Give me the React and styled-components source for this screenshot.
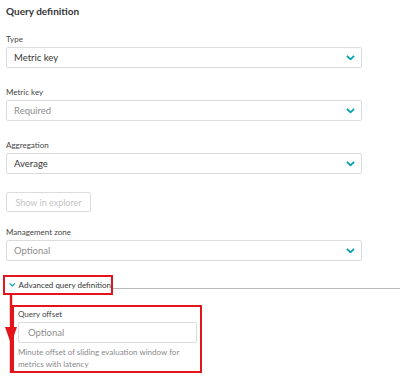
import styled, { createGlobalStyle } from 'styled-components';

const GlobalStyle = createGlobalStyle`
  body {
    margin: 0;
    background: #fff;
    font-family: Lato, "Open Sans", "Liberation Sans", sans-serif;
    color: #454646;
  }
`

const Chevron = ({ size = 9 }) => (
  <svg width={size} height={size * 0.6} viewBox="0 0 10 6">
    <path d="M1 1 L5 4.8 L9 1" fill="none" stroke="#00a1b2" strokeWidth="2" />
  </svg>
);

const Field = ({ label, value, placeholder }) => (
  <FieldWrap>
    <Label>{label}</Label>
    <Select>
      <SelectText placeholder={placeholder ? 1 : 0}>{value}</SelectText>
      <Chevron />
    </Select>
  </FieldWrap>
);

const App = () => {
  return (
    <Page>
      <GlobalStyle />
      <Title>Query definition</Title>
      <Field label='Type' value='Metric key' />
      <Field label='Metric key' value='Required' placeholder />
      <Field label='Aggregation' value='Average' />
      <Button disabled>Show in explorer</Button>
      <Field label='Management zone' value='Optional' placeholder />
      <Advanced>
        <ToggleRow>
          <Toggle>
            <Chevron size={9} />
            <span>Advanced query definition</span>
          </Toggle>
          <Divider />
        </ToggleRow>
        <Highlight>
          <Label>Query offset</Label>
          <Input placeholder='Optional' />
          <Help>Minute offset of sliding evaluation window for metrics with latency</Help>
        </Highlight>
        <Arrow width='14' height='80' viewBox='0 0 14 80'>
          <rect x='4.8' y='0' width='2.4' height='78' fill='#e3141c' />
          <polygon points='0,32 12,32 6,49' fill='#e3141c' />
        </Arrow>
      </Advanced>
    </Page>
  );
};

const Page = styled.div`
  width: 400px;
  height: 379px;
  box-sizing: border-box;
  padding: 4px 38px 0 6px;
  overflow: hidden;
`

const Title = styled.div`
  font-size: 10px;
  font-weight: 700;
  line-height: 14px;
  color: #353535;
  margin-bottom: 15px;
`

const FieldWrap = styled.div`
  margin-bottom: 18px;
`

const Label = styled.div`
  font-size: 8px;
  line-height: 12px;
  color: #454646;
  margin-bottom: 2px;
`

const Select = styled.div`
  height: 21px;
  box-sizing: border-box;
  border: 1px solid #dcdcdc;
  border-radius: 2px;
  display: flex;
  align-items: center;
  justify-content: space-between;
  padding: 0 6px 0 7px;
`

const SelectText = styled.span`
  font-size: 9.5px;
  color: ${props => props.placeholder ? '#8e8e8e' : '#353535'};
`

const Button = styled.button`
  display: block;
  width: 85px;
  height: 20px;
  padding: 0;
  border: 1px solid #dcdcdc;
  border-radius: 2px;
  background: #fff;
  font-family: inherit;
  font-size: 9px;
  color: #c4c4c4;
  margin: 1px 0 14px;
`

const Advanced = styled.div`
  position: relative;
  margin: -4px -38px 0 -3px;
`

const ToggleRow = styled.div`
  display: flex;
  align-items: center;
`

const Toggle = styled.div`
  display: flex;
  align-items: center;
  gap: 3px;
  width: 110px;
  height: 20px;
  box-sizing: border-box;
  border: 2px solid #e3141c;
  padding-left: 4px;
  font-size: 8px;
  color: #353535;
  white-space: nowrap;
`

const Divider = styled.div`
  flex: 1;
  height: 1px;
  background: #b9b9b9;
  margin-top: 6px;
`

const Highlight = styled.div`
  width: 190px;
  margin: 10px 0 0 9px;
  box-sizing: border-box;
  border: 2px solid #e3141c;
  padding: 1px 3px 1px 4px;
`

const Input = styled.input`
  display: block;
  width: 100%;
  height: 21px;
  box-sizing: border-box;
  border: 1px solid #dcdcdc;
  border-radius: 2px;
  padding: 0 9px;
  font-family: inherit;
  font-size: 9.5px;
  margin-bottom: 3px;
  &::placeholder {
    color: #8e8e8e;
  }
`

const Help = styled.div`
  font-size: 8px;
  line-height: 12px;
  color: #8a8a8a;
  padding-right: 10px;
`

const Arrow = styled.svg`
  position: absolute;
  left: 2px;
  top: 20px;
`

export default App;
